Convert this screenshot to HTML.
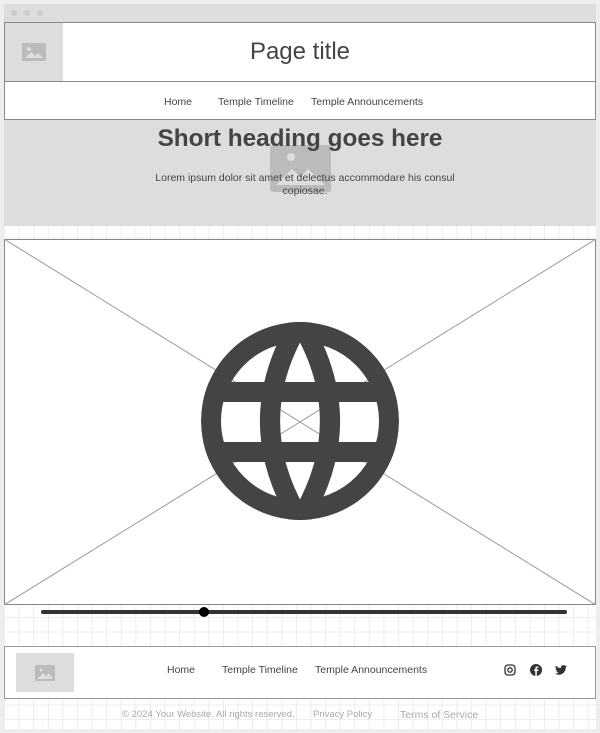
<!DOCTYPE html>
<html><head><meta charset="utf-8"><style>
*{margin:0;padding:0;box-sizing:border-box}
body{width:600px;height:733px;background:#eee;font-family:"Liberation Sans",sans-serif;position:relative;overflow:hidden;color:#333}
.abs{position:absolute}
.grid{background-color:#fff;background-image:linear-gradient(#ececec 1px,transparent 1px),linear-gradient(90deg,#ececec 1px,transparent 1px);background-size:14.6px 14.6px}
</style></head><body>
<div class="abs grid" style="left:4px;top:4px;width:592px;height:725px"></div>
<div class="abs" style="left:4px;top:4px;width:592px;height:18px;background:#ddd"></div>
<div class="abs" style="left:11px;top:10px;width:6px;height:6px;border-radius:3px;background:#ccc"></div>
<div class="abs" style="left:24px;top:10px;width:6px;height:6px;border-radius:3px;background:#ccc"></div>
<div class="abs" style="left:37px;top:10px;width:6px;height:6px;border-radius:3px;background:#ccc"></div>
<div class="abs" style="left:4px;top:22px;width:592px;height:60px;background:#fff;border:1px solid #888;border-bottom:none"></div>
<div class="abs" style="left:5px;top:23px;width:58px;height:58px;background:#ddd"></div>
<svg class="abs" style="left:22px;top:43px" width="24" height="18"><rect width="24" height="18" rx="2" fill="#bbb"/><circle cx="7" cy="6" r="2" fill="#ddd"/><path d="M3 15 L9 9 L13 13 L16 10 L21 15Z" fill="#ddd"/></svg>
<div class="abs" style="left:63px;top:38px;width:474px;text-align:center;font-size:24px;color:#444">Page title</div>
<div class="abs" style="left:4px;top:81px;width:592px;height:39px;background:#fff;border:1px solid #888"></div>
<div class="abs" style="left:164px;top:96px;font-size:10.5px;color:#444">Home</div>
<div class="abs" style="left:218px;top:96px;font-size:10.5px;color:#444">Temple Timeline</div>
<div class="abs" style="left:311px;top:96px;font-size:10.5px;color:#444">Temple Announcements</div>
<div class="abs" style="left:4px;top:120px;width:592px;height:106px;background:#ddd"></div>
<svg class="abs" style="left:270px;top:145px" width="61" height="47"><rect width="61" height="47" rx="3" fill="#bbb"/><circle cx="21" cy="12" r="4" fill="#ddd"/><path d="M6 40 L22 24 L30 32 L38 24 L55 40Z" fill="#ddd"/></svg>
<div class="abs" style="left:4px;top:125px;width:592px;text-align:center;font-size:24.3px;font-weight:bold;color:#444">Short heading goes here</div>
<div class="abs" style="left:140px;top:172px;width:330px;text-align:center;font-size:10.5px;line-height:13px;color:#444">Lorem ipsum dolor sit amet et delectus accommodare his consul copiosae.</div>
<svg class="abs" style="left:4px;top:239px" width="592" height="366"><defs><clipPath id="c"><circle cx="300" cy="421" r="99"/></clipPath></defs><rect x="0.5" y="0.5" width="591" height="365" fill="#fff" stroke="#888"/><line x1="0" y1="0" x2="592" y2="366" stroke="#999"/><line x1="592" y1="0" x2="0" y2="366" stroke="#999"/>
<g transform="translate(-4,-239)" clip-path="url(#c)" fill="none" stroke="#444" stroke-width="20"><circle cx="300" cy="421" r="89"/><line x1="200" y1="392" x2="400" y2="392"/><line x1="200" y1="452" x2="400" y2="452"/><path d="M300 322 Q240 421 300 520 Q360 421 300 322Z"/></g></svg>
<div class="abs" style="left:41px;top:610px;width:526px;height:4px;border-radius:2px;background:#333"></div>
<div class="abs" style="left:199px;top:607px;width:10px;height:10px;border-radius:5px;background:#000"></div>
<div class="abs" style="left:4px;top:646px;width:592px;height:53px;background:#fff;border:1px solid #999"></div>
<div class="abs" style="left:16px;top:653px;width:58px;height:39px;background:#ddd"></div>
<svg class="abs" style="left:35px;top:665px" width="20" height="16"><rect width="20" height="16" rx="1" fill="#bbb"/><circle cx="6" cy="5" r="1.5" fill="#ddd"/><path d="M2 14 L8 8 L11 11 L14 8 L18 14Z" fill="#ddd"/></svg>
<div class="abs" style="left:167px;top:664px;font-size:10.5px;color:#444">Home</div>
<div class="abs" style="left:222px;top:664px;font-size:10.5px;color:#444">Temple Timeline</div>
<div class="abs" style="left:315px;top:664px;font-size:10.5px;color:#444">Temple Announcements</div>
<svg class="abs" style="left:504px;top:664px" width="12" height="12"><rect x="1" y="1" width="10" height="10" rx="3" fill="none" stroke="#333" stroke-width="1.3"/><circle cx="6" cy="6" r="2.2" fill="none" stroke="#333" stroke-width="1.3"/></svg>
<svg class="abs" style="left:530px;top:664px" width="12" height="12"><circle cx="6" cy="6" r="6" fill="#333"/><path d="M6.8 12 V7 H8.3 L8.5 5.5 H6.8 V4.6 C6.8 4.1 7 3.8 7.6 3.8 H8.5 V2.5 H7.2 C5.8 2.5 5.3 3.3 5.3 4.4 V5.5 H4 V7 H5.3 V12Z" fill="#fff"/></svg>
<svg class="abs" style="left:555px;top:665px" width="12" height="10" viewBox="0 0 24 20"><path d="M24 2.4a10 10 0 0 1-2.8.8A5 5 0 0 0 23.3.5a10 10 0 0 1-3.1 1.2A4.9 4.9 0 0 0 11.8 6 14 14 0 0 1 1.7.9a4.9 4.9 0 0 0 1.5 6.6A4.9 4.9 0 0 1 1 6.9a4.9 4.9 0 0 0 3.9 4.8 4.9 4.9 0 0 1-2.2.1 4.9 4.9 0 0 0 4.6 3.4A9.9 9.9 0 0 1 0 17.2 14 14 0 0 0 7.5 19.4c9 0 14-7.5 14-14v-.6A10 10 0 0 0 24 2.4z" fill="#333"/></svg>
<div class="abs" style="left:122px;top:709px;font-size:9.5px;color:#aaa">© 2024 Your Website. All rights reserved.</div>
<div class="abs" style="left:313px;top:709px;font-size:9.5px;color:#aaa">Privacy Policy</div>
<div class="abs" style="left:400px;top:709px;font-size:10.5px;color:#aaa">Terms of Service</div>
</body></html>
